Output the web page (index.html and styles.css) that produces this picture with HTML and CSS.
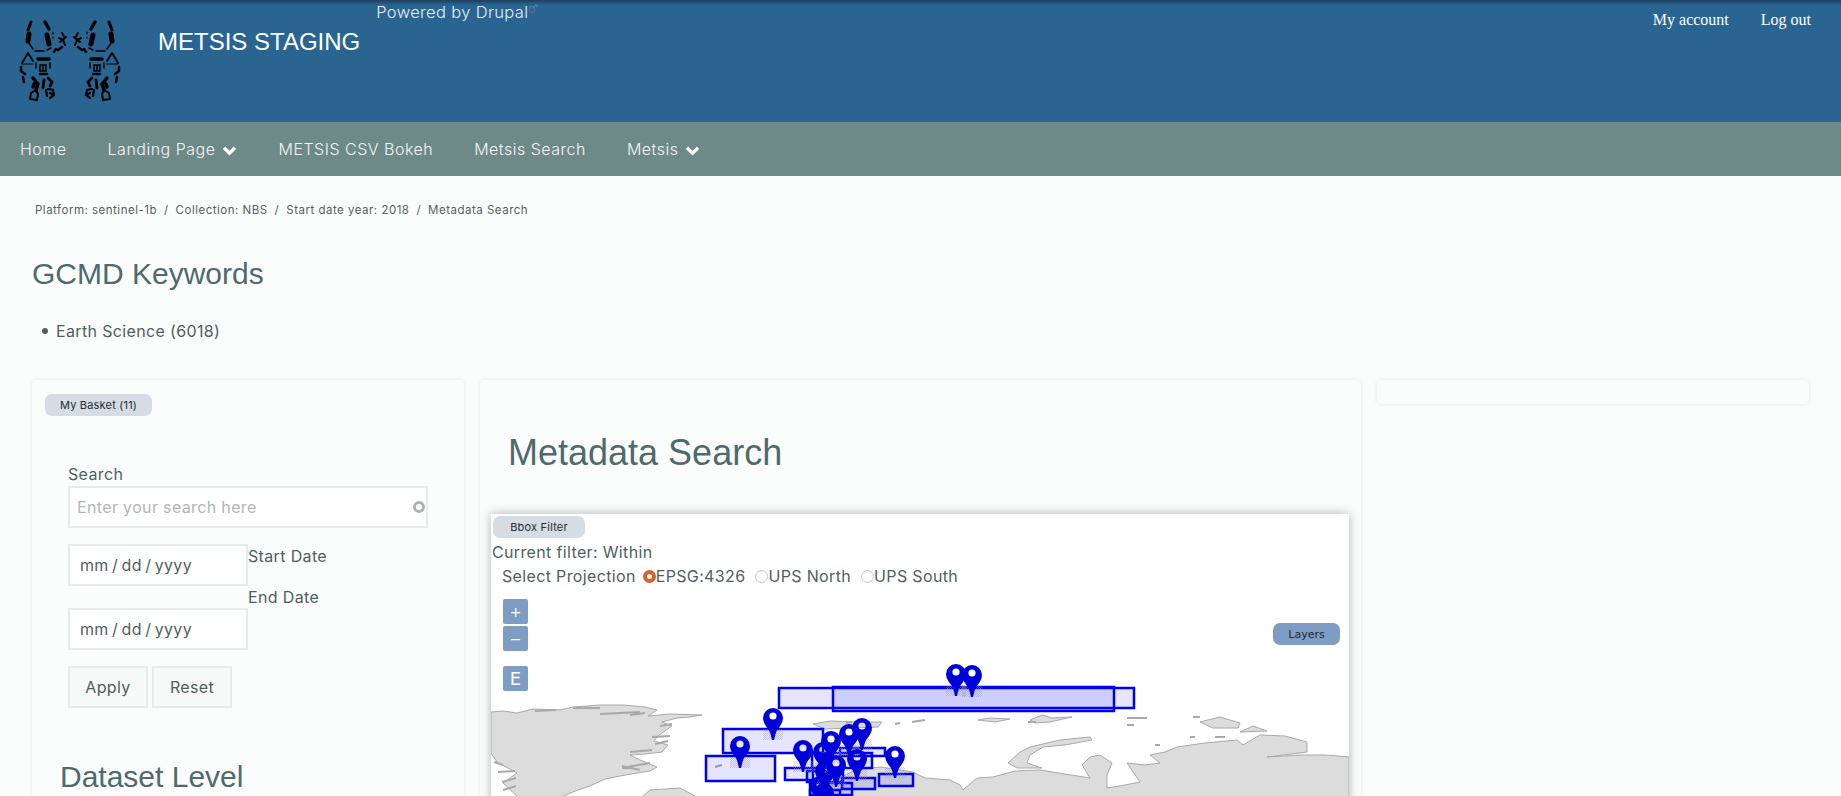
FILE: index.html
```html
<!DOCTYPE html>
<html lang="en">
<head>
    <meta charset="UTF-8">
    <meta name="viewport" content="width=device-width, initial-scale=1.0">
    <title>Metadata Search</title>
    <link rel="stylesheet" href="styles.css">
</head>
<body>
    <header class="site-head">
        <svg class="logo" viewBox="0 0 140 120" width="140" height="120" aria-label="Metsis logo">
            <defs>
                <g id="robot" fill="none" stroke="#000" stroke-linecap="round">
                    <path d="M31 22 L28 30" stroke-width="3"/>
                    <path d="M29 34 L28 41" stroke-width="5"/>
                    <path d="M29 43 L33 49" stroke-width="1.500"/>
                    <path d="M45 22 L49 29" stroke-width="3.500"/>
                    <path d="M47 35 L49 44" stroke-width="5"/>
                    <path d="M53 32 L53 34 M53 37 L53 38" stroke-width="1.200"/>
                    <path d="M35 51 L44 51" stroke-width="1.500"/>
                    <path d="M47 50 L51 48" stroke-width="1.500"/>
                    <path d="M54 52 L56 49 M58 50 L62 47" stroke-width="2.500"/>
                    <path d="M60 42 L66 37 M62 33 L65 38 M63 40 L65 45 M59 38 L63 40" stroke-width="2"/>
                    <path d="M28 53 L22 63 M28 53 L33 61" stroke-width="1.800"/>
                    <path d="M22 64 L33 64" stroke-width="1.200"/>
                    <path d="M21 67 L21 71 L25 74 M23 77 L24 82" stroke-width="2.500"/>
                    <path d="M38 59 L49 59" stroke-width="3.500"/>
                    <path d="M36 63 L36 68 M50 63 L50 68" stroke-width="1.500"/>
                    <path d="M40 65 L46 65 L46 71 L40 71 Z M43 65 L43 71" stroke-width="1.500"/>
                    <path d="M40 74 L47 74" stroke-width="2.500"/>
                    <path d="M33 78 L38 84 L36 90 M34 84 L33 87" stroke-width="3.500"/>
                    <path d="M48 78 L52 82 L50 86 M44 80 L43 88" stroke-width="2.800"/>
                    <path d="M30 99 L31 93 L36 90 L38 94 L37 100 Z" stroke-width="2"/>
                    <path d="M48 89 L53 90 L54 95 L50 98 M46 90 L47 96 M50 93 L52 94" stroke-width="2.200"/>
                </g>
            </defs>
            <use href="#robot"/>
            <use href="#robot" transform="matrix(-1 0 0 1 140 0)"/>
        </svg>
        <div class="site-name">METSIS STAGING</div>
        <div class="powered">Powered by Drupal<svg class="ext" viewBox="0 0 10 10" width="9" height="9"><path d="M1 3h5v6H1zM4 5l5-4M6 1h3v3" fill="none" stroke="#5b7d9c" stroke-width="1"/></svg></div>
        <nav class="user-links">
            <a href="#">My account</a>
            <a href="#">Log out</a>
        </nav>
    </header>

    <nav class="main-nav">
        <a href="#">Home</a>
        <a href="#">Landing Page <svg class="chev" viewBox="0 0 16 12" width="15" height="11"><path d="M2 3l6 6 6-6" fill="none" stroke="#fff" stroke-width="3.600"/></svg></a>
        <a href="#">METSIS CSV Bokeh</a>
        <a href="#">Metsis Search</a>
        <a href="#">Metsis <svg class="chev" viewBox="0 0 16 12" width="15" height="11"><path d="M2 3l6 6 6-6" fill="none" stroke="#fff" stroke-width="3.600"/></svg></a>
    </nav>

    <main class="page">
        <div class="crumbs">
            <a href="#">Platform: sentinel-1b</a><span>/</span>
            <a href="#">Collection: NBS</a><span>/</span>
            <a href="#">Start date year: 2018</a><span>/</span>
            <a href="#">Metadata Search</a>
        </div>

        <h2 class="gcmd-title">GCMD Keywords</h2>
        <ul class="gcmd-list">
            <li>Earth Science (6018)</li>
        </ul>

        <div class="cols">
            <aside class="card col-left">
                <button class="pill basket">My Basket (11)</button>
                <form class="search-form">
                    <label class="search-label">Search</label>
                    <div class="search-box">
                        <input class="field search-input" type="text" placeholder="Enter your search here">
                        <span class="spinner"></span>
                    </div>
                    <div class="dates">
                        <input class="field date-input" type="text" value="mm / dd / yyyy">
                        <label class="date-label">Start Date</label>
                        <label class="date-label end-label">End Date</label>
                        <input class="field date-input end-input" type="text" value="mm / dd / yyyy">
                    </div>
                    <div class="form-btns">
                        <button class="form-btn" type="button">Apply</button>
                        <button class="form-btn" type="button">Reset</button>
                    </div>
                </form>
                <h2 class="level-title">Dataset Level</h2>
            </aside>

            <section class="card col-mid">
                <h1 class="mid-title">Metadata Search</h1>
                <div class="map-box">
                    <button class="pill bbox">Bbox Filter</button>
                    <div class="filter-line">Current filter: Within</div>
                    <div class="proj-line">
                        <span class="proj-label">Select Projection</span>
                        <label class="proj"><span class="radio on"></span>EPSG:4326</label>
                        <label class="proj"><span class="radio"></span>UPS North</label>
                        <label class="proj"><span class="radio"></span>UPS South</label>
                    </div>
                    <div class="map">
                        <svg class="map-svg" viewBox="491 590 858 300" width="858" height="300">
                            <defs>
                                <pattern id="dither" width="2" height="2" patternUnits="userSpaceOnUse">
                                    <rect width="1" height="1" fill="#9a9ab0"/>
                                    <rect x="1" y="1" width="1" height="1" fill="#9a9ab0"/>
                                </pattern>
                                <g id="pin">
                                    <rect x="-10" y="12" width="20" height="11" fill="url(#dither)" opacity="0.45"/>
                                    <path d="M1 23 L-1 23 L-2.500 17 L-4 13 Q-10 6 -10 1 A10 10 0 1 1 10 1 Q10 6 4 13 L2.500 17 Z M3.600 -1 A3.600 3.600 0 1 0 -3.600 -1 A3.600 3.600 0 1 0 3.600 -1 Z" fill="#0000d8" fill-rule="evenodd"/>
                                </g>
                            </defs>
                            <g class="land">
                                <path d="M491 712 L503 711 L517 713 L533 709 L560 710 L573 707 L600 705 L623 705 L645 707 L657 710 L648 716 L670 714 L702 715 L690 717 L677 718 L662 722 L672 726 L666 730 L658 736 L654 741 L668 745 L662 752 L645 754 L630 755 L640 760 L657 767 L650 771 L637 773 L620 776 L605 779 L590 786 L578 790 L563 796 L563 890 L517 890 L517 796 L503 783 L517 773 L497 762 L491 753 Z"/>
                                <path d="M643 796 L650 790 L665 789 L680 788 L695 796 L695 890 L643 890 Z"/>
                                <path d="M813 724 L830 721 L860 722 L882 722 L878 727 L850 728 L825 729 Z"/>
                                <path d="M832 782 L855 770 L880 767 L913 772 L925 778 L950 780 L960 785 L963 790 L977 778 L993 777 L1015 771 L1040 770 L1065 774 L1090 778 L1082 765 L1090 757 L1100 755 L1112 763 L1107 775 L1107 788 L1125 785 L1140 782 L1127 763 L1145 765 L1160 763 L1150 755 L1165 752 L1177 747 L1205 743 L1237 740 L1243 745 L1260 735 L1285 736 L1307 742 L1307 752 L1267 757 L1300 755 L1325 755 L1349 757 L1349 890 L832 890 Z"/>
                                <path d="M1008 763 L1020 752 L1030 747 L1060 740 L1090 737 L1092 740 L1065 745 L1043 747 L1030 755 L1027 763 L1042 768 L1017 768 Z"/>
                                <path d="M1200 722 L1220 717 L1240 723 L1238 728 L1213 728 Z"/>
                                <path d="M1240 732 L1253 726 L1267 731 Z"/>
                                <path d="M978 720 L990 718 L1010 719 L995 722 Z"/>
                                <path d="M1030 720 L1042 715 L1052 718 L1072 717 L1050 722 L1035 723 Z"/>
                            </g>
                            <g class="coast">
                                <path d="M535 711 L556 710 M573 708 L600 708 M600 714 L640 712 M630 715 L645 713"/>
                                <path d="M660 726 L672 724 M652 737 L670 736 M655 744 L668 741 M630 752 L652 750 M622 768 L650 763 M622 766 L640 770"/>
                                <path d="M494 762 L503 765 M498 772 L515 771 M502 782 L516 778 M503 790 L516 786"/>
                                <path d="M1127 718 L1147 718 M1127 725 L1134 725 M1193 717 L1200 717 M1028 722 L1036 722"/>
                                <path d="M912 722 L925 720 M895 724 L900 723 M846 723 L852 722 M715 767 L722 765 M1190 737 L1195 737 M1215 737 L1225 737 M1155 745 L1160 745"/>
                            </g>
                            <g class="boxes">
                                <rect x="779" y="688" width="355" height="20"/>
                                <rect x="833" y="687" width="281" height="24"/>
                                <rect x="723" y="729" width="100" height="24"/>
                                <rect x="706" y="756" width="69" height="25"/>
                                <rect x="785" y="768" width="28" height="12"/>
                                <rect x="812" y="753" width="60" height="15"/>
                                <rect x="840" y="748" width="45" height="8"/>
                                <rect x="807" y="771" width="36" height="11"/>
                                <rect x="842" y="778" width="33" height="11"/>
                                <rect x="879" y="774" width="34" height="12"/>
                                <rect x="810" y="783" width="42" height="12"/>
                                <rect x="810" y="790" width="30" height="30"/>
                            </g>
                            <use href="#pin" x="956" y="673"/>
                            <use href="#pin" x="972" y="674"/>
                            <use href="#pin" x="773" y="717"/>
                            <use href="#pin" x="740" y="745"/>
                            <use href="#pin" x="803" y="749"/>
                            <use href="#pin" x="895" y="755"/>
                            <use href="#pin" x="862" y="727"/>
                            <use href="#pin" x="849" y="733"/>
                            <use href="#pin" x="831" y="740"/>
                            <use href="#pin" x="823" y="751"/>
                            <use href="#pin" x="857" y="758"/>
                            <use href="#pin" x="836" y="764"/>
                            <use href="#pin" x="825" y="770"/>
                            <use href="#pin" x="820" y="785"/>
                            <use href="#pin" x="824" y="792"/>
                        </svg>
                        <div class="zoom-ctl">
                            <button class="map-btn">+</button>
                            <button class="map-btn">&minus;</button>
                        </div>
                        <button class="map-btn extent">E</button>
                        <button class="layers">Layers</button>
                    </div>
                </div>
            </section>

            <aside class="card col-right"></aside>
        </div>
    </main>
</body>
</html>
```

FILE: styles.css
```css
html, body{
    margin: 0;
    height: 100%;
    overflow: hidden;
}
body{
    background: #fbfdfc;
    color: #4e5f60;
    font-family: Inter, 'Noto Sans', sans-serif;
    font-size: 16px;
    letter-spacing: 0.35px;
}
a{
    color: inherit;
    text-decoration: none;
}

/* top banner */
.site-head{
    display: flex;
    height: 122px;
    background: linear-gradient(#1e3f5e, #2a6592 5px);
    color: #fff;
}
.logo{
    flex: none;
    margin-right: 18px;
}
.site-name{
    font-family: 'Liberation Sans', Arial, sans-serif;
    font-size: 24px;
    line-height: 28px;
    letter-spacing: 0;
    padding-top: 28px;
    margin-right: 16px;
}
.powered{
    font-size: 16.500px;
    font-weight: 300;
    line-height: 24px;
    letter-spacing: 0.35px;
    color: #e6eef3;
}
.ext{
    vertical-align: 5px;
    margin-left: 1px;
}
.user-links{
    margin-left: auto;
    display: flex;
    gap: 32px;
    padding: 10px 30px 0 0;
    font-family: 'Liberation Serif', 'Times New Roman', serif;
    font-size: 16px;
    line-height: 20px;
    letter-spacing: 0;
}

/* main menu */
.main-nav{
    display: flex;
    align-items: center;
    gap: 41px;
    height: 54px;
    padding-left: 20px;
    background: #6d8a89;
    color: #f2f5f5;
    font-weight: 300;
    font-size: 16px;
    letter-spacing: 0.5px;
}
.chev{
    vertical-align: -1px;
    margin-left: 2px;
}

.crumbs{
    display: flex;
    gap: 7px;
    padding: 26px 0 0 35px;
    font-size: 11.500px;
    letter-spacing: 0.5px;
    line-height: 16px;
    color: #555f60;
}
.gcmd-title{
    margin: 38px 0 0 32px;
    font-family: 'Liberation Sans', Arial, sans-serif;
    font-size: 30px;
    font-weight: 400;
    line-height: 36px;
    letter-spacing: 0;
    color: #4f6a6d;
}
.gcmd-list{
    margin: 27px 0 0;
    padding-left: 42px;
    line-height: 24px;
    list-style: none;
}
.gcmd-list li{
    display: flex;
    align-items: center;
    gap: 8px;
}
.gcmd-list li::before{
    content: "";
    width: 6px;
    height: 6px;
    border-radius: 50%;
    background: #4e5f60;
}

/* three columns */
.cols{
    display: flex;
    align-items: flex-start;
    gap: 16px;
    margin-top: 37px;
    padding: 0 32px;
}
.card{
    flex: none;
    box-sizing: border-box;
    background: #fbfdfc;
    border-radius: 5px;
    box-shadow: 0 0 4px rgba(0, 0, 0, 0.09);
}
.col-left{
    width: 432px;
    padding: 14px 13px 60px;
}
.col-mid{
    width: 881px;
    padding: 0 11px;
}
.col-right{
    width: 432px;
    height: 24px;
}

.pill{
    display: block;
    border: none;
    border-radius: 7px;
    background: #d5dce4;
    color: #222c36;
    font-family: inherit;
    font-size: 11px;
    letter-spacing: 0.2px;
    padding: 0;
}
.basket{
    width: 107px;
    height: 22px;
}
.search-form{
    padding: 46px 23px 0;
}
.search-label{
    display: block;
    line-height: 24px;
}
.search-box{
    position: relative;
    width: 360px;
}
.field{
    display: block;
    box-sizing: border-box;
    height: 42px;
    border: 2px solid #e6ecec;
    background: #fff;
    font-family: inherit;
    font-size: 16px;
    letter-spacing: 0.35px;
    color: #4e5f60;
    outline: none;
}
.search-input{
    width: 100%;
    padding: 0 7px;
}
.search-input::placeholder{
    color: #b0b6b6;
}
.spinner{
    position: absolute;
    right: 3px;
    top: 15px;
    box-sizing: border-box;
    width: 12px;
    height: 12px;
    border: 3px solid #aeb2b2;
    border-radius: 50%;
}
.dates{
    display: grid;
    grid-template-columns: 180px auto;
    grid-template-rows: 42px 22px 42px;
    margin-top: 16px;
}
.date-input{
    width: 180px;
    padding: 0 10px;
    word-spacing: -1.500px;
}
.date-label{
    line-height: 24px;
}
.end-label{
    grid-column: 2;
    grid-row: 2;
    line-height: 22px;
}
.end-input{
    grid-column: 1;
    grid-row: 3;
}
.form-btns{
    display: flex;
    gap: 4px;
    margin-top: 16px;
}
.form-btn{
    box-sizing: border-box;
    width: 80px;
    height: 42px;
    border: 2px solid #e6ecec;
    background: #f8f9f9;
    color: #4e5f60;
    font-family: inherit;
    font-size: 16px;
    letter-spacing: 0.35px;
}
.level-title{
    margin: 51px 0 0 15px;
    font-family: 'Liberation Sans', Arial, sans-serif;
    font-size: 30px;
    font-weight: 400;
    line-height: 36px;
    letter-spacing: 0;
    color: #4f6a6d;
}

.mid-title{
    margin: 0;
    padding: 53px 0 41px 17px;
    font-family: 'Liberation Sans', Arial, sans-serif;
    font-size: 36px;
    font-weight: 400;
    line-height: 40px;
    letter-spacing: 0;
    color: #4f6a6d;
}
.map-box{
    width: 858px;
    height: 400px;
    background: #fff;
    box-shadow: 0 0 10px rgba(0, 0, 0, 0.3);
    padding-top: 2px;
}
.bbox{
    width: 92px;
    height: 22px;
    margin-left: 2px;
}
.filter-line{
    margin: 2px 0 0 1px;
    line-height: 24px;
}
.proj-line{
    display: flex;
    align-items: center;
    line-height: 24px;
    margin-left: 11px;
    gap: 10px;
}
.proj-label{
    margin-right: -3px;
}
.proj{
    display: flex;
    align-items: center;
}
.radio{
    box-sizing: border-box;
    width: 13px;
    height: 13px;
    border: 1px solid #c4c8c8;
    border-radius: 50%;
    background: #fff;
}
.radio.on{
    border: 4px solid #d4622e;
}

.map{
    position: relative;
    margin-top: 2px;
}
.map-svg{
    display: block;
}
.land path{
    fill: #dcdcdc;
    stroke: #a8a8a8;
    stroke-width: 1;
}
.coast path{
    fill: none;
    stroke: #a8a8a8;
    stroke-width: 2;
}
.boxes rect{
    fill: rgba(0, 0, 255, 0.1);
    stroke: #0000f0;
    stroke-width: 2.500;
}
.zoom-ctl{
    position: absolute;
    left: 12px;
    top: 9px;
    display: flex;
    flex-direction: column;
    gap: 2px;
}
.map-btn{
    display: block;
    width: 25px;
    height: 25px;
    padding: 0;
    border: none;
    border-radius: 2px;
    background: #7f9cc2;
    color: #fff;
    font-family: 'DejaVu Sans', sans-serif;
    font-size: 14px;
    line-height: 22px;
}
.extent{
    position: absolute;
    left: 12px;
    top: 76px;
    font-size: 18px;
}
.layers{
    position: absolute;
    right: 9px;
    top: 33px;
    width: 67px;
    height: 22px;
    padding: 0;
    border: none;
    border-radius: 7px;
    background: #7f9cc2;
    color: #1c2838;
    font-family: 'DejaVu Sans', sans-serif;
    font-size: 11px;
}
```
